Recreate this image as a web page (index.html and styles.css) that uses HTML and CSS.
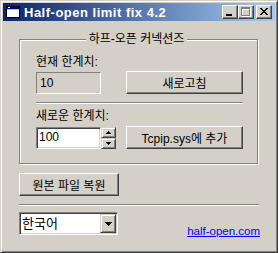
FILE: index.html
```html
<!DOCTYPE html>
<html lang="ko">
<head>
  <meta charset="UTF-8" />
  <title>Half-open limit fix 4.2</title>
  <link rel="stylesheet" href="styles.css">
</head>
<body>
  <div class="window">
    <div class="titlebar">
      <svg class="app-icon" viewBox="0 0 16 16" width="16" height="16">
        <rect x="1" y="2" width="14" height="12" fill="#000"/>
        <rect x="2" y="3" width="12" height="10" fill="#c0c0c0"/>
        <rect x="2" y="3" width="12" height="2" fill="#0000a8"/>
        <rect x="3" y="3" width="2" height="1" fill="#fff"/>
        <rect x="2" y="6" width="12" height="7" fill="#fff"/>
      </svg>
      <span class="title">Half-open limit fix 4.2</span>
      <div class="caption">
        <div class="cap-btn">
          <svg viewBox="0 0 14 12" width="14" height="12"><rect x="3" y="8" width="6" height="2" fill="#000"/></svg>
        </div>
        <div class="cap-btn">
          <svg viewBox="0 0 14 12" width="14" height="12">
            <path d="M3 2h9v9H3z M4 4v6h7V4z" fill="#fff" fill-rule="evenodd"/>
            <path d="M2 1h9v9H2z M3 3v6h7V3z" fill="#808080" fill-rule="evenodd"/>
          </svg>
        </div>
        <div class="cap-btn close">
          <svg viewBox="0 0 14 12" width="14" height="12">
            <path d="M3 2h2v1h-2z M9 2h2v1h-2z M4 3h2v1h-2z M8 3h2v1h-2z M5 4h4v1h-4z M6 5h2v1h-2z M5 6h4v1h-4z M4 7h2v1h-2z M8 7h2v1h-2z M3 8h2v1h-2z M9 8h2v1h-2z" fill="#000"/>
          </svg>
        </div>
      </div>
    </div>

    <div class="client">
      <div class="group">
        <div class="group-title">하프-오픈 커넥션즈</div>

        <div class="label">현재 한계치:</div>
        <div class="row">
          <div class="edit readonly">10</div>
          <button class="btn wide">새로고침</button>
        </div>

        <div class="sep"></div>

        <div class="label second">새로운 한계치:</div>
        <div class="row second">
          <div class="spin">
            <div class="edit">100</div>
            <div class="updown">
              <div class="arrow-btn">
                <svg width="5" height="3" viewBox="0 0 5 3"><path d="M2 0h1v1h1v1h1v1H0V2h1V1h1z" fill="#000"/></svg>
              </div>
              <div class="arrow-btn">
                <svg width="5" height="3" viewBox="0 0 5 3"><path d="M0 0h5v1H4v1H3v1H2V2H1V1H0z" fill="#000"/></svg>
              </div>
            </div>
          </div>
          <button class="btn wide">Tcpip.sys에 추가</button>
        </div>
      </div>

      <button class="btn restore">원본 파일 복원</button>

      <div class="sep full"></div>

      <div class="bottom">
        <div class="combo">
          <span class="combo-text">한국어</span>
          <div class="drop-btn">
            <svg width="7" height="4" viewBox="0 0 7 4"><path d="M0 0h7v1H6v1H5v1H4v1H3V3H2V2H1V1H0z" fill="#000"/></svg>
          </div>
        </div>
        <a class="link" href="#">half-open.com</a>
      </div>
    </div>
  </div>
</body>
</html>
```

FILE: styles.css
```css
/* Reset and base */
* {
  box-sizing: border-box;
  margin: 0;
  padding: 0;
}

body {
  width: 278px;
  height: 253px;
  overflow: hidden;
  background: #d4d0c8;
  color: #000;
  font-family: "Liberation Sans", "Noto Sans CJK KR", sans-serif;
  font-size: 12px;
}

/* Window frame */
.window {
  width: 278px;
  height: 253px;
  display: flex;
  flex-direction: column;
  padding: 2px;
  background: #d4d0c8;
  border: 1px solid;
  border-color: #d4d0c8 #404040 #404040 #d4d0c8;
  box-shadow: inset 1px 1px #fff, inset -1px -1px #808080;
}

.titlebar {
  height: 18px;
  flex: none;
  display: flex;
  align-items: center;
  padding: 0 3px 0 2px;
  background: linear-gradient(to right, #0a246a, #a6caf0);
}

.app-icon {
  flex: none;
  display: block;
}

.title {
  flex: 1;
  margin-left: 3px;
  color: #fff;
  font: bold 13px "Liberation Sans", sans-serif;
  letter-spacing: 0.5px;
  white-space: nowrap;
}

.caption {
  display: flex;
}

.cap-btn {
  width: 16px;
  height: 14px;
  background: #d4d0c8;
  border: 1px solid;
  border-color: #fff #404040 #404040 #fff;
  box-shadow: inset -1px -1px #808080;
}
.cap-btn svg {
  display: block;
}
.cap-btn.close {
  margin-left: 2px;
}

/* Client area */
.client {
  flex: 1;
  display: flex;
  flex-direction: column;
  align-items: flex-start;
  padding: 18px 0 0 16px;
}

.group {
  width: 239px;
  display: flex;
  flex-direction: column;
  padding: 0 14px 14px 16px;
  border: 1px solid #808080;
  box-shadow: inset 1px 1px #fff, 1px 1px #fff;
}

.group-title {
  align-self: center;
  height: 16px;
  line-height: 16px;
  margin: -9px 6px 0 0;
  padding: 0 3px;
  background: #d4d0c8;
  white-space: nowrap;
}

.label {
  height: 14px;
  line-height: 14px;
  margin-top: 8px;
  white-space: nowrap;
}
.label.second {
  margin-top: 5px;
}

.row {
  height: 23px;
  margin-top: 2px;
  display: flex;
  justify-content: space-between;
  align-items: flex-end;
}
.row.second {
  margin-top: 3px;
}

.edit {
  width: 65px;
  height: 22px;
  line-height: 18px;
  padding-left: 2px;
  background: #fff;
  border: 1px solid;
  border-color: #808080 #fff #fff #808080;
  box-shadow: inset 1px 1px #404040, inset -1px -1px #d4d0c8;
}
.edit.readonly {
  background: #d4d0c8;
  box-shadow: none;
  padding-left: 3px;
  line-height: 20px;
}

.spin {
  display: flex;
}

.updown {
  width: 15px;
  height: 22px;
  display: flex;
  flex-direction: column;
}

.arrow-btn,
.drop-btn {
  display: flex;
  align-items: center;
  justify-content: center;
  background: #d4d0c8;
  border: 1px solid;
  border-color: #d4d0c8 #404040 #404040 #d4d0c8;
  box-shadow: inset 1px 1px #fff, inset -1px -1px #808080;
}
.arrow-btn {
  height: 11px;
}
.arrow-btn svg,
.drop-btn svg {
  display: block;
}

.btn {
  height: 23px;
  background: #d4d0c8;
  color: #000;
  font: inherit;
  border: 1px solid;
  border-color: #fff #404040 #404040 #fff;
  box-shadow: inset -1px -1px #808080;
  white-space: nowrap;
}
.btn.wide {
  width: 117px;
}
.btn.restore {
  width: 100px;
  margin-top: 9px;
}

.sep {
  height: 2px;
  margin-top: 8px;
  border-top: 1px solid #808080;
  border-bottom: 1px solid #fff;
}
.sep.full {
  width: 240px;
}

.bottom {
  width: 241px;
  margin-top: 6px;
  display: flex;
  justify-content: space-between;
  align-items: flex-start;
}

.combo {
  width: 99px;
  height: 23px;
  display: flex;
  background: #fff;
  border: 1px solid;
  border-color: #808080 #fff #fff #808080;
  box-shadow: inset 1px 1px #404040, inset -1px -1px #d4d0c8;
  padding: 1px;
}

.combo-text {
  flex: 1;
  padding-left: 1px;
  line-height: 19px;
  font-size: 13px;
}

.drop-btn {
  width: 16px;
  height: 19px;
}

.link {
  margin-top: 13px;
  line-height: 13px;
  font-size: 11.5px;
  color: #0000ff;
  text-decoration: underline;
  white-space: nowrap;
}
```
